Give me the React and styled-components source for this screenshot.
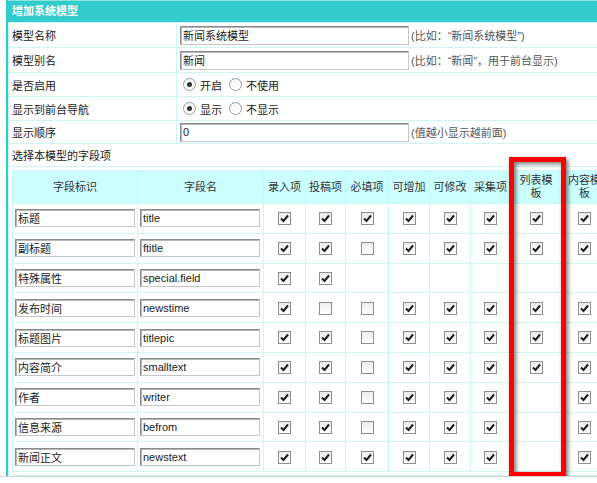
import React from "react";
import styled, { createGlobalStyle } from "styled-components";

const GlobalStyle = createGlobalStyle`
  html, body {
    margin: 0;
    padding: 0;
    background: #fff;
    overflow: hidden;
  }
  body {
    font-family: "Liberation Sans", "Noto Sans CJK SC", sans-serif;
    font-size: 11px;
    color: #1a1a1a;
  }
  * {
    box-sizing: border-box;
  }
`;

const Page = styled.div`
  position: relative;
  width: 100vw;
  overflow: hidden;
  border-bottom: 1px solid #d4d4d4;
`;

const Frame = styled.div`
  margin-left: 6px;
  width: 620px;
  border-left: 2px solid #33cccc;
`;

const TitleBar = styled.div`
  height: 22px;
  line-height: 20px;
  padding-left: 4px;
  border-top: 1px solid #8fe3e3;
  background: #33cccc;
  color: #fff;
  font-weight: bold;
  font-size: 11px;
`;

const FormTable = styled.table`
  width: 100%;
  table-layout: fixed;
  border-collapse: separate;
  border-spacing: 1px;
  background: #ccf7f7;
`;

const Cell = styled.td`
  height: ${(p) => p.$h || 24}px;
  padding: 0 3px;
  background: #fff;
  vertical-align: middle;
  white-space: nowrap;
`;

const LabelCell = styled(Cell)`
  width: 167px;
`;

const HolderCell = styled.td`
  padding: 3px;
  background: #fff;
`;

const TextField = styled.input`
  width: ${(p) => p.$w || 229}px;
  height: ${(p) => p.$hgt || 19}px;
  padding: 0 2px;
  margin: 0;
  font: inherit;
  color: #222;
  vertical-align: middle;
  background: #fff;
  border: 1px solid;
  border-color: #8a8a8a #c6c6c6 #c6c6c6 #8a8a8a;
  box-shadow: inset 1px 1px 0 #b5b5b5;
  outline: none;
`;

const Hint = styled.span`
  margin-left: 2px;
  color: #555;
  vertical-align: middle;
`;

const RadioGroup = styled.div`
  display: flex;
  align-items: center;
  padding-left: 3px;
`;

const RadioDot = styled.span`
  position: relative;
  width: 13px;
  height: 13px;
  border-radius: 50%;
  border: 1px solid #9a9a9a;
  background: linear-gradient(#f4f4f4, #fff);
  &::after {
    content: "";
    position: absolute;
    left: 3px;
    top: 3px;
    width: 5px;
    height: 5px;
    border-radius: 50%;
    background: ${(p) => (p.$on ? "#333" : "transparent")};
  }
`;

const RadioText = styled.span`
  margin: 0 7px 0 4px;
`;

const FieldTable = styled.table`
  width: 596px;
  table-layout: fixed;
  border-collapse: separate;
  border-spacing: 1px;
  background: #ccf7f7;
`;

const Head = styled.th`
  width: ${(p) => p.$w}px;
  height: 32px;
  padding: ${(p) => (p.$wrap ? "0 5px" : "0")};
  background: #ccffff;
  color: #333;
  font-weight: normal;
  line-height: 13px;
  text-align: center;
  vertical-align: middle;
  overflow: hidden;
`;

const Body = styled.td`
  height: 28.8px;
  padding: 0 2px;
  background: #fff;
  text-align: ${(p) => (p.$center ? "center" : "left")};
  vertical-align: middle;
`;

const Box = styled.span`
  display: inline-block;
  width: 13px;
  height: 13px;
  vertical-align: middle;
  border: 1px solid #8e8e8e;
  background: linear-gradient(#ececec, #fff);
  svg {
    display: block;
  }
`;

const Highlight = styled.div`
  position: absolute;
  left: 509px;
  top: 157px;
  width: 57px;
  height: 320px;
  border: 5px solid #ff0000;
  filter: drop-shadow(2px 2px 2px rgba(0, 0, 0, 0.55));
  pointer-events: none;
`;

const heads = [
  { t: "字段标识", w: 124 },
  { t: "字段名", w: 125 },
  { t: "录入项", w: 41 },
  { t: "投稿项", w: 39 },
  { t: "必填项", w: 42 },
  { t: "可增加", w: 40 },
  { t: "可修改", w: 40 },
  { t: "采集项", w: 39 },
  { t: "列表模板", w: 50, wrap: true },
  { t: "内容模板", w: 45, wrap: true },
];

// 1 = checked, 0 = empty box, null = no box
const fields = [
  { label: "标题", name: "title", checks: [1, 1, 1, 1, 1, 1, 1, 1] },
  { label: "副标题", name: "ftitle", checks: [1, 1, 0, 1, 1, 1, 1, 1] },
  { label: "特殊属性", name: "special.field", checks: [1, 1, null, null, null, null, null, null] },
  { label: "发布时间", name: "newstime", checks: [1, 0, 0, 1, 1, 1, 1, 1] },
  { label: "标题图片", name: "titlepic", checks: [1, 1, 0, 1, 1, 1, 1, 1] },
  { label: "内容简介", name: "smalltext", checks: [1, 1, 0, 1, 1, 1, 1, 1] },
  { label: "作者", name: "writer", checks: [1, 1, 0, 1, 1, 1, null, 1] },
  { label: "信息来源", name: "befrom", checks: [1, 1, 0, 1, 1, 1, null, 1] },
  { label: "新闻正文", name: "newstext", checks: [1, 1, 1, 1, 1, 1, null, 1] },
];

const Check = ({ on }) => (
  <Box>
    {on ? (
      <svg width="11" height="11" viewBox="0 0 11 11">
        <path d="M2 5.5 L4.5 8 L9 2.5" fill="none" stroke="#1c1c1c" strokeWidth="2" />
      </svg>
    ) : null}
  </Box>
);

const Radio = ({ on, children }) => (
  <>
    <RadioDot $on={on} />
    <RadioText>{children}</RadioText>
  </>
);

const App = () => {
  return (
    <Page>
      <GlobalStyle />
      <Frame>
        <TitleBar>增加系统模型</TitleBar>
        <FormTable>
          <tbody>
            <tr>
              <LabelCell $h={24}>模型名称</LabelCell>
              <Cell $h={24}>
                <TextField readOnly value="新闻系统模型" />
                <Hint>(比如：“新闻系统模型”)</Hint>
              </Cell>
            </tr>
            <tr>
              <Cell $h={24}>模型别名</Cell>
              <Cell $h={24}>
                <TextField readOnly value="新闻" />
                <Hint>(比如：“新闻”，用于前台显示)</Hint>
              </Cell>
            </tr>
            <tr>
              <Cell $h={23}>是否启用</Cell>
              <Cell $h={23}>
                <RadioGroup>
                  <Radio on>开启</Radio>
                  <Radio>不使用</Radio>
                </RadioGroup>
              </Cell>
            </tr>
            <tr>
              <Cell $h={23}>显示到前台导航</Cell>
              <Cell $h={23}>
                <RadioGroup>
                  <Radio on>显示</Radio>
                  <Radio>不显示</Radio>
                </RadioGroup>
              </Cell>
            </tr>
            <tr>
              <Cell $h={22}>显示顺序</Cell>
              <Cell $h={22}>
                <TextField readOnly value="0" />
                <Hint>(值越小显示越前面)</Hint>
              </Cell>
            </tr>
            <tr>
              <Cell $h={22} colSpan={2}>
                选择本模型的字段项
              </Cell>
            </tr>
            <tr>
              <HolderCell colSpan={2}>
                <FieldTable>
                  <thead>
                    <tr>
                      {heads.map((h) => (
                        <Head key={h.t} $w={h.w} $wrap={h.wrap}>
                          {h.t}
                        </Head>
                      ))}
                    </tr>
                  </thead>
                  <tbody>
                    {fields.map((f) => (
                      <tr key={f.name}>
                        <Body>
                          <TextField readOnly value={f.label} $w={120} $hgt={18} />
                        </Body>
                        <Body>
                          <TextField readOnly value={f.name} $w={120} $hgt={18} />
                        </Body>
                        {f.checks.map((c, i) => (
                          <Body key={i} $center>
                            {c === null ? null : <Check on={c === 1} />}
                          </Body>
                        ))}
                      </tr>
                    ))}
                  </tbody>
                </FieldTable>
              </HolderCell>
            </tr>
          </tbody>
        </FormTable>
      </Frame>
      <Highlight />
    </Page>
  );
};

export default App;
